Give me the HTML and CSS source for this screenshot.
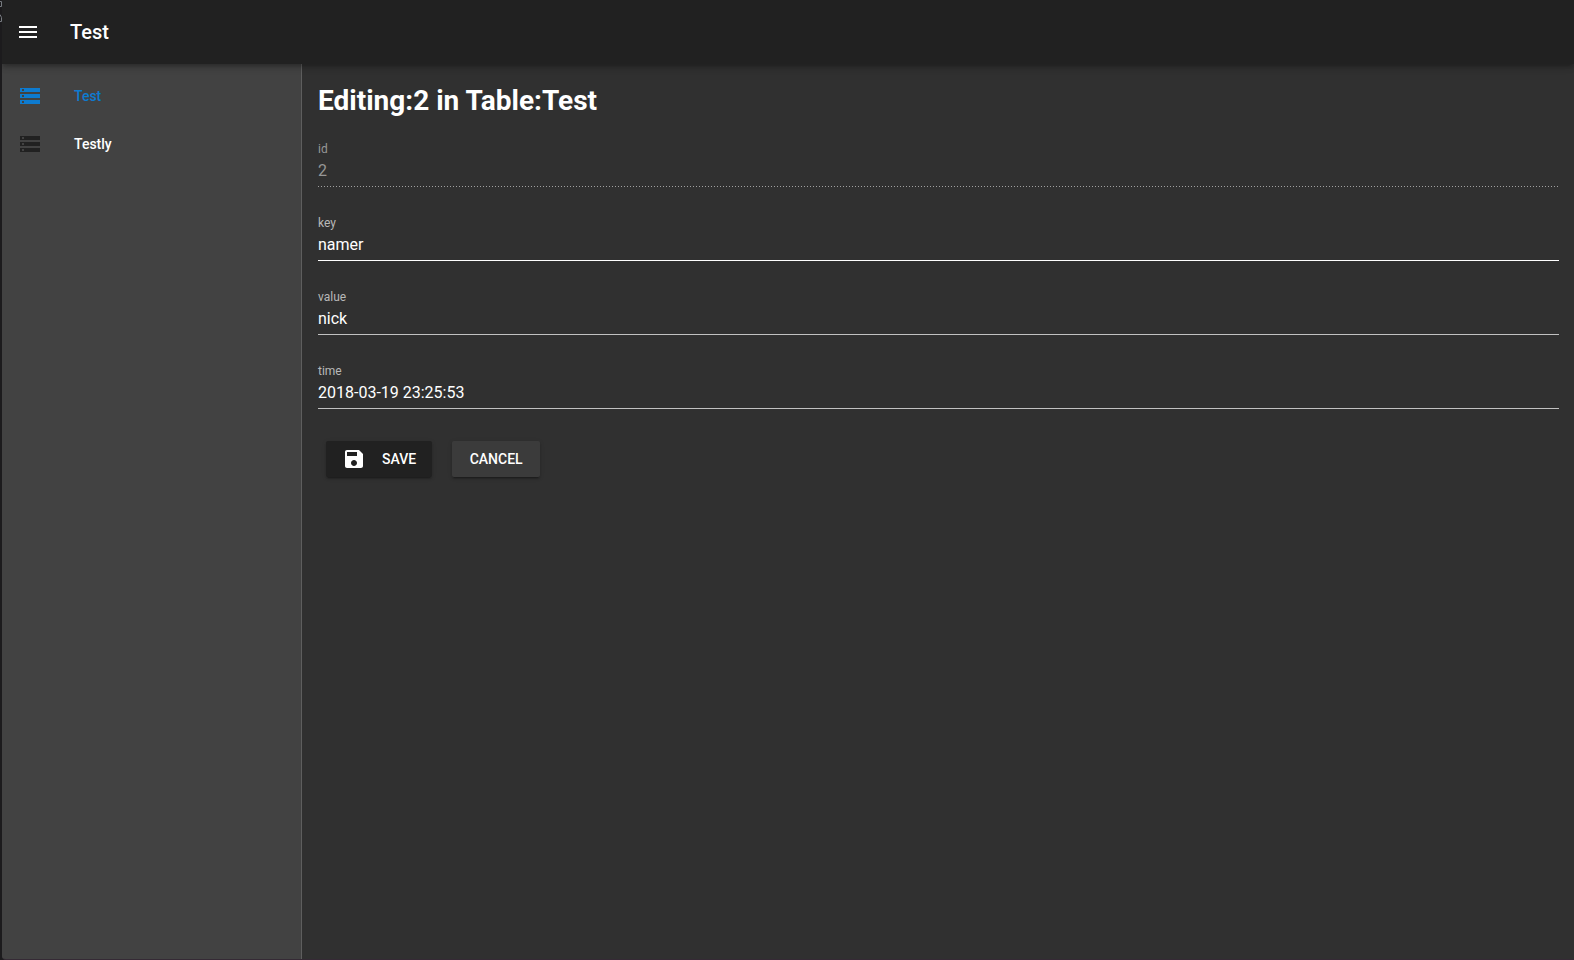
FILE: index.html
```html
<!DOCTYPE html>
<html lang="en">
<head>
<meta charset="utf-8">
<title>Test</title>
<link rel="stylesheet" href="styles.css">
</head>
<body>
<div class="edge" aria-hidden="true"><svg class="edge-marks" viewBox="0 0 2 24"><path d="M0 1.500h1.500v5H0M0 14.500l1.500 3v4H0" fill="none" stroke="#777b80" stroke-width="1"/></svg></div>
<div class="app">
  <header class="toolbar">
    <button class="menu" type="button" aria-label="Menu"><svg class="icon" viewBox="0 0 24 24"><path d="M3 18h18v-2H3v2zm0-5h18v-2H3v2zm0-7v2h18V6H3z"/></svg></button>
    <span class="brand">Test</span>
  </header>
  <div class="body">
    <nav class="sidebar">
      <a class="item active" href="#test"><svg class="icon" viewBox="0 0 24 24"><path d="M2 20h20v-4H2v4zm2-3h2v2H4v-2zM2 4v4h20V4H2zm4 3H4V5h2v2zm-4 7h20v-4H2v4zm2-3h2v2H4v-2z"/></svg><span>Test</span></a>
      <a class="item" href="#testly"><svg class="icon" viewBox="0 0 24 24"><path d="M2 20h20v-4H2v4zm2-3h2v2H4v-2zM2 4v4h20V4H2zm4 3H4V5h2v2zm-4 7h20v-4H2v4zm2-3h2v2H4v-2z"/></svg><span>Testly</span></a>
    </nav>
    <main class="content">
      <h1>Editing:2 in Table:Test</h1>
      <form class="form">
        <div class="field disabled"><label for="id">id</label><input id="id" type="text" value="2" disabled></div>
        <div class="field hover"><label for="key">key</label><input id="key" type="text" value="namer"></div>
        <div class="field"><label for="value">value</label><input id="value" type="text" value="nick"></div>
        <div class="field"><label for="time">time</label><input id="time" type="text" value="2018-03-19 23:25:53"></div>
        <div class="actions">
          <button class="btn save" type="button"><svg class="icon" viewBox="0 0 24 24"><path d="M17 3H5c-1.110 0-2 .9-2 2v14c0 1.100.890 2 2 2h14c1.100 0 2-.9 2-2V7l-4-4zm-5 16c-1.660 0-3-1.340-3-3s1.340-3 3-3 3 1.340 3 3-1.340 3-3 3zm3-10H5V5h10v4z"/></svg><span>SAVE</span></button>
          <button class="btn cancel" type="button">CANCEL</button>
        </div>
      </form>
    </main>
  </div>
</div>
</body>
</html>
```
FILE: styles.css
```css
* { box-sizing: border-box; }
body {
  margin: 0;
  min-height: 100vh;
  display: flex;
  background: #1c1b1d;
  color: #fff;
  font-family: Roboto, "Liberation Sans", sans-serif;
  font-size: 14px;
}
.icon { width: 24px; height: 24px; fill: currentColor; flex: none; display: block; }
.edge { width: 2px; flex: none; }
.edge-marks { width: 2px; height: 24px; display: block; }
.app {
  flex: 1;
  min-width: 0;
  display: flex;
  flex-direction: column;
  background: #303030;
  border-bottom-left-radius: 4px;
  overflow: hidden;
  border-bottom: 1px solid #352a35;
}
.toolbar {
  height: 64px;
  flex: none;
  display: flex;
  align-items: center;
  gap: 30px;
  padding: 0 14px;
  background: #212121;
  position: relative;
  z-index: 1;
  box-shadow: 0 2px 4px -1px rgba(0,0,0,.2), 0 4px 5px rgba(0,0,0,.14), 0 1px 10px rgba(0,0,0,.12);
}
.menu { border: 0; padding: 0; background: none; color: #fff; }
.brand { font-size: 20px; font-weight: 500; line-height: 24px; }
.body { flex: 1; display: flex; }
.sidebar {
  width: 300px;
  flex: none;
  padding: 8px 0;
  background: #424242;
  border-right: 1px solid #5e5e5e;
}
.item {
  height: 48px;
  padding: 0 16px;
  display: flex;
  align-items: center;
  gap: 32px;
  color: #fff;
  font-weight: 500;
  text-decoration: none;
}
.item .icon { color: #212121; }
.item.active, .item.active .icon { color: #0d7bd0; }
.content { flex: 1; min-width: 0; padding: 16px 15px 16px 16px; }
h1 { margin: 0 0 18px; font-size: 28px; line-height: 42px; font-weight: 700; }
.form { display: flex; flex-direction: column; gap: 27px; }
.field { display: flex; flex-direction: column; border-bottom: 1px solid #c1c1c1; }
.field label { font-size: 12px; line-height: 18px; color: #b8b8b8; }
.field input {
  width: 100%;
  height: 28px;
  padding: 0 0 4px;
  border: 0;
  outline: 0;
  background: none;
  color: #fff;
  font: 16px Roboto, "Liberation Sans", sans-serif;
}
.hover { border-bottom-color: #fff; }
.disabled { border-bottom: 0; }
.disabled::after {
  content: "";
  height: 1px;
  background: repeating-linear-gradient(to right, #a0a0a0 0 1px, transparent 1px 3px);
}
.disabled label, .disabled input { color: #979797; }
.actions { display: flex; align-items: center; gap: 20px; padding: 5px 8px; }
.btn {
  height: 36px;
  min-width: 88px;
  padding: 0 16px;
  border: 0;
  border-radius: 2px;
  display: flex;
  align-items: center;
  justify-content: center;
  color: #fff;
  font: 500 14px Roboto, "Liberation Sans", sans-serif;
  box-shadow: 0 3px 1px -2px rgba(0,0,0,.2), 0 2px 2px rgba(0,0,0,.14), 0 1px 5px rgba(0,0,0,.12);
}
.save { background: #212121; gap: 16px; }
.cancel { background: #3b3b3b; }
```
